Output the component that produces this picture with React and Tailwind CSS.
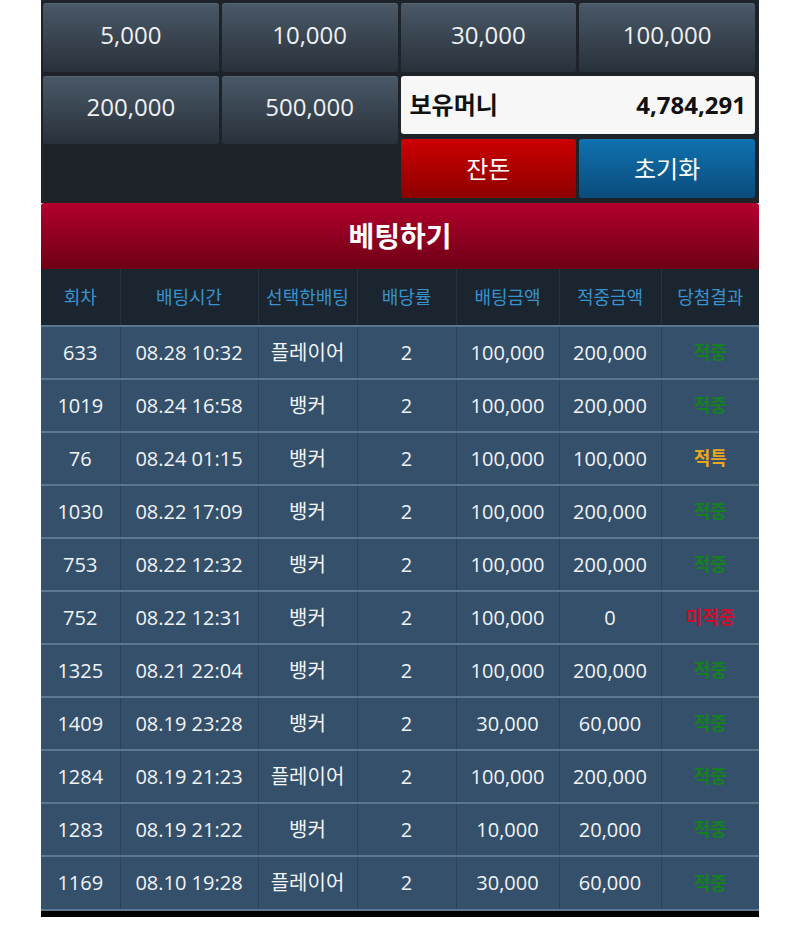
import React from 'react';

const chips = ['5,000', '10,000', '30,000', '100,000'];

const headers = ['회차', '배팅시간', '선택한배팅', '배당률', '배팅금액', '적중금액', '당첨결과'];

// column widths taken from the screenshot
const colW = ['w-[79px]', 'w-[138px]', 'w-[99px]', 'w-[99px]', 'w-[103px]', 'w-[102px]', 'w-[98px]'];

const bets = [
  { no: '633', time: '08.28 10:32', pick: '플레이어', rate: '2', amount: '100,000', win: '200,000', result: '적중' },
  { no: '1019', time: '08.24 16:58', pick: '뱅커', rate: '2', amount: '100,000', win: '200,000', result: '적중' },
  { no: '76', time: '08.24 01:15', pick: '뱅커', rate: '2', amount: '100,000', win: '100,000', result: '적특' },
  { no: '1030', time: '08.22 17:09', pick: '뱅커', rate: '2', amount: '100,000', win: '200,000', result: '적중' },
  { no: '753', time: '08.22 12:32', pick: '뱅커', rate: '2', amount: '100,000', win: '200,000', result: '적중' },
  { no: '752', time: '08.22 12:31', pick: '뱅커', rate: '2', amount: '100,000', win: '0', result: '미적중' },
  { no: '1325', time: '08.21 22:04', pick: '뱅커', rate: '2', amount: '100,000', win: '200,000', result: '적중' },
  { no: '1409', time: '08.19 23:28', pick: '뱅커', rate: '2', amount: '30,000', win: '60,000', result: '적중' },
  { no: '1284', time: '08.19 21:23', pick: '플레이어', rate: '2', amount: '100,000', win: '200,000', result: '적중' },
  { no: '1283', time: '08.19 21:22', pick: '뱅커', rate: '2', amount: '10,000', win: '20,000', result: '적중' },
  { no: '1169', time: '08.10 19:28', pick: '플레이어', rate: '2', amount: '30,000', win: '60,000', result: '적중' },
];

const resultColor = {
  '적중': 'text-[#15801f]',
  '적특': 'text-[#e8a81c]',
  '미적중': 'text-[#c8102e]',
};

const ChipButton = ({ label, h }) => (
  <button
    className={`${h} rounded-[3px] bg-gradient-to-b from-[#4a5968] to-[#28313a] pb-[6px] text-[24px] text-[#eef1f4] shadow-[inset_0_1px_0_rgba(255,255,255,0.08)]`}
  >
    {label}
  </button>
);

export default function App() {
  return (
    <div className="min-h-[941px] bg-white font-['Open_Sans','Noto_Sans_CJK_KR',sans-serif]">
      <div className="ml-[41px] w-[718px]">
        {/* chip panel */}
        <div className="bg-[#1d2328] pl-[2px] pr-[4px] pt-[3px] pb-[5px]">
          <div className="grid grid-cols-4 gap-x-[3px]">
            {chips.map((c) => (
              <ChipButton key={c} label={c} h="h-[69px]" />
            ))}
          </div>
          <div className="mt-[4px] grid grid-cols-2 gap-x-[3px]">
            <div className="grid grid-cols-2 gap-x-[3px] self-start">
              <ChipButton label="200,000" h="h-[68px]" />
              <ChipButton label="500,000" h="h-[68px]" />
            </div>
            <div className="flex flex-col gap-[5px]">
              <div className="flex h-[58px] items-center justify-between rounded-[3px] bg-[#f7f7f7] px-[9px]">
                <span className="text-[24px] font-bold text-[#111]">보유머니</span>
                <span className="text-[24px] font-bold text-[#111]">4,784,291</span>
              </div>
              <div className="grid grid-cols-2 gap-x-[3px]">
                <button className="h-[59px] rounded-[3px] bg-gradient-to-b from-[#cc0000] to-[#8e0000] text-[24px] text-white">
                  잔돈
                </button>
                <button className="h-[59px] rounded-[3px] bg-gradient-to-b from-[#0f72b0] to-[#0b4c7c] text-[24px] text-white">
                  초기화
                </button>
              </div>
            </div>
          </div>
        </div>

        {/* bet button */}
        <button className="flex h-[66px] w-full items-center justify-center rounded-t-[3px] bg-gradient-to-b from-[#b3002c] to-[#6e0016] text-[28px] font-bold text-white">
          베팅하기
        </button>

        {/* history table */}
        <table className="w-full table-fixed border-collapse">
          <thead>
            <tr className="h-[57px] bg-[#1b2530]">
              {headers.map((h, i) => (
                <th
                  key={h}
                  className={`${colW[i]} border-l border-[#26323d] text-center text-[18px] font-normal text-[#3a92cc] first:border-l-0`}
                >
                  {h}
                </th>
              ))}
            </tr>
          </thead>
          <tbody>
            {bets.map((b) => (
              <tr key={b.no + b.time} className="h-[53px] border-t-2 border-[#5a7890] bg-[#35506a] text-[20px] text-[#f1f4f7]">
                <td className="border-l border-[#2b4257] text-center first:border-l-0">{b.no}</td>
                <td className="border-l border-[#2b4257] text-center">{b.time}</td>
                <td className="border-l border-[#2b4257] text-center">{b.pick}</td>
                <td className="border-l border-[#2b4257] text-center">{b.rate}</td>
                <td className="border-l border-[#2b4257] text-center">{b.amount}</td>
                <td className="border-l border-[#2b4257] text-center">{b.win}</td>
                <td className={`border-l border-[#2b4257] text-center text-[18px] font-semibold ${resultColor[b.result]}`}>
                  {b.result}
                </td>
              </tr>
            ))}
          </tbody>
        </table>
        <div className="h-[8px] border-t-2 border-[#5a7890] bg-black" />
      </div>
    </div>
  );
}
